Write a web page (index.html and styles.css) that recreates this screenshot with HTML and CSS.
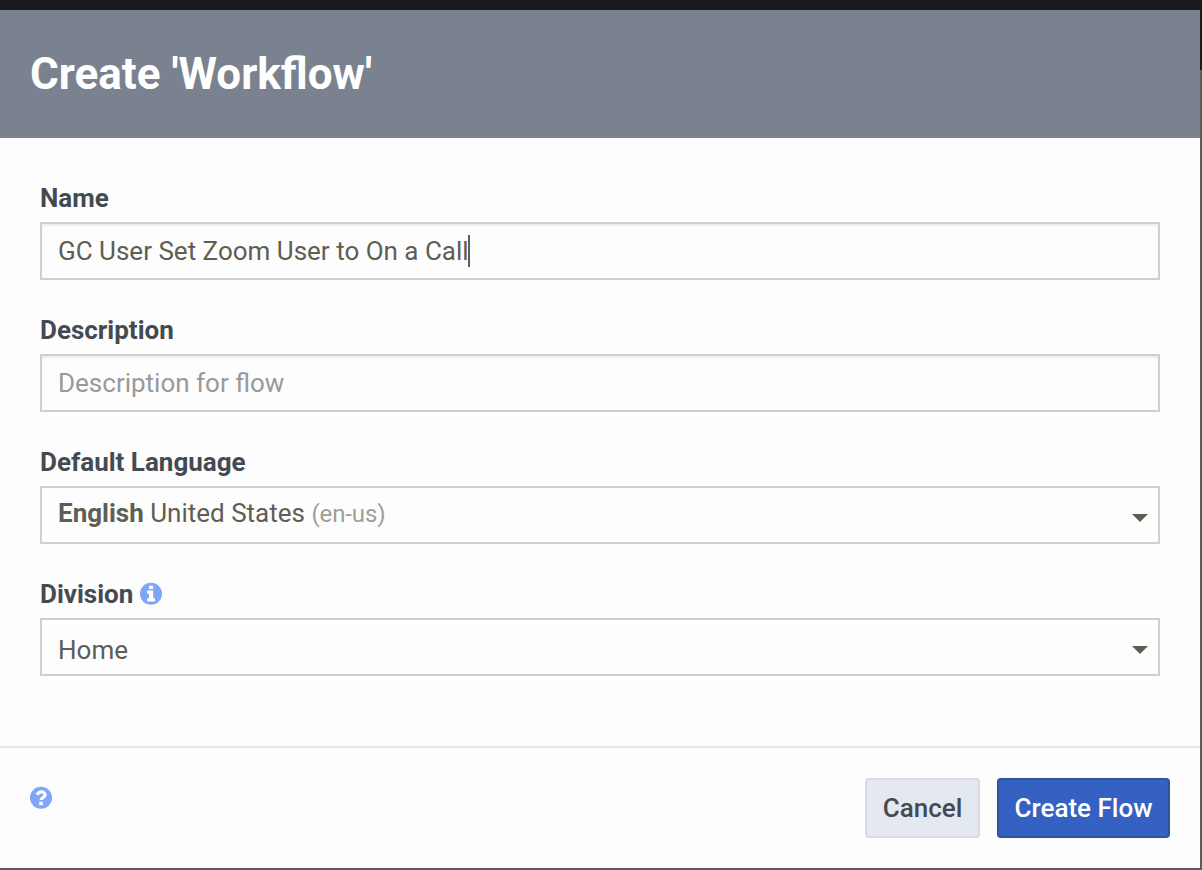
FILE: index.html
```
<!DOCTYPE html>
<html lang="en">
<head>
<meta charset="utf-8">
<title>Create Workflow</title>
<link rel="stylesheet" href="styles.css">
</head>
<body>
<form class="dialog">
  <header class="dialog-header"><h1>Create 'Workflow'</h1></header>
  <main class="dialog-body">
    <section class="field">
      <div class="label"><span>Name</span></div>
      <div class="control input"><span>GC User Set Zoom User to On a Call</span><i class="cursor"></i></div>
    </section>
    <section class="field">
      <div class="label"><span>Description</span></div>
      <div class="control input placeholder"><span>Description for flow</span></div>
    </section>
    <section class="field">
      <div class="label"><span>Default Language</span></div>
      <div class="control select language"><span><b>English</b> United States <small>(en-us)</small></span><i class="caret"></i></div>
    </section>
    <section class="field">
      <div class="label"><span>Division</span>
        <svg class="info" viewBox="0 0 22 22"><circle cx="11" cy="10.700" r="11" fill="#7ea6f8"/><path d="M9 2.700h4.200v3.200H9zM7.200 7.500h6v7.700H15v3.200H7.200v-3.200H9v-4.500H7.200z" fill="#fff"/></svg>
      </div>
      <div class="control select"><span>Home</span><i class="caret"></i></div>
    </section>
  </main>
  <footer class="dialog-footer">
    <svg class="help" viewBox="0 0 22 22"><circle cx="11" cy="10.700" r="11" fill="#7ea6f8"/><path d="M7 7.800C8 5.700 9.300 4.900 11.200 4.900c2.200 0 3.900 1.300 3.900 3 0 2.500-4 2.500-4 5.200" fill="none" stroke="#fff" stroke-width="3.200"/><path d="M9.200 14.700h3.600v3.500H9.200z" fill="#fff"/></svg>
    <div class="actions">
      <button type="button" class="button">Cancel</button>
      <button type="button" class="button primary">Create Flow</button>
    </div>
  </footer>
</form>
</body>
</html>
```
FILE: styles.css
```
* { box-sizing: border-box; }
body {
  margin: 0;
  height: 870px;
  padding: 10px 2px 2px 0;
  overflow: hidden;
  background: linear-gradient(#191a1c 70px, #5b5b59 70px);
  font-family: Roboto, sans-serif;
  font-size: 26px;
  color: #5e5e54;
  -webkit-font-smoothing: antialiased;
}
.dialog { height: 858px; background: #fdfdfd; display: flex; flex-direction: column; }
.dialog-header { height: 128px; padding: 37px 30px; background: #7b828f; }
h1 { margin: 0; font-size: 44px; line-height: 54px; font-weight: 700; color: #fff; }
.dialog-body { height: 608px; padding: 40px 40px 0; display: flex; flex-direction: column; gap: 30px; }
.field { height: 102px; }
.label { height: 44px; display: flex; align-items: center; gap: 7px; padding-bottom: 4px; font-weight: 700; color: #444a52; }
.info, .help { width: 22px; height: 22px; overflow: visible; }
.control { height: 58px; border: 2px solid #d0d0d0; padding: 0 16px; display: flex; align-items: center; white-space: pre; }
.input { box-shadow: inset 0 2px 2px #eee; }
.placeholder { color: #999; }
.cursor { width: 2px; height: 32px; margin-left: -1px; background: #5e5e54; }
.select { justify-content: space-between; padding-right: 10px; padding-top: 5px; }
.language { padding-top: 0; padding-bottom: 4px; }
.language .caret { margin-top: 10px; }
small { font-size: 24px; letter-spacing: -.1px; color: #9e9e98; }
.caret { border: 8px solid transparent; border-top-color: #5e5e54; border-bottom: 0; }
.dialog-footer { flex: 1; border-top: 2px solid #e5e5e5; padding: 30px 30px 0; display: flex; justify-content: space-between; }
.help { margin-top: 9px; }
.actions { display: flex; gap: 17px; height: 60px; }
.button { width: 115px; padding: 0; border: 2px solid #d7dbe0; border-radius: 4px; background: #e4e8f1; font: 500 26px Roboto, sans-serif; color: #444a52; }
.primary { width: 173px; background: #3561c2; border-color: #2e539f; color: #fff; }
```
